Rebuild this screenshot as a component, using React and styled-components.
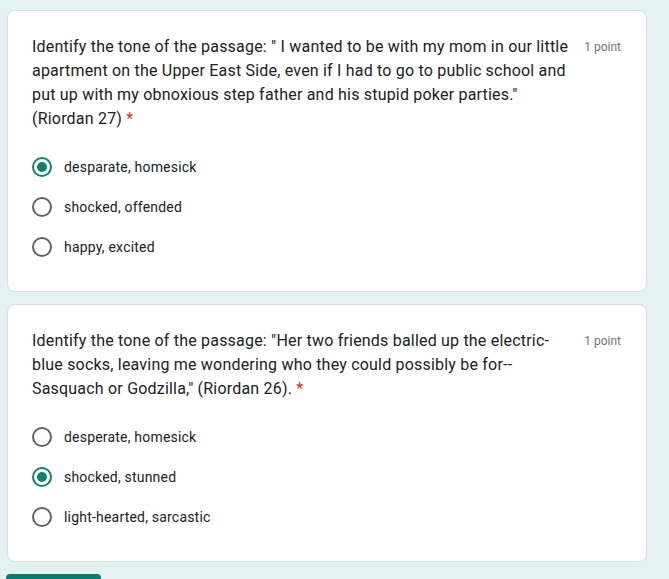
import React from 'react';
import styled, { createGlobalStyle } from 'styled-components';

const Global = createGlobalStyle`
  html, body {
    margin: 0;
    background: #e3f1f0;
  }
  body {
    font-family: Roboto, "Liberation Sans", sans-serif;
    color: #202124;
  }
`;

const Page = styled.div`
  padding: 10px 23px 0 7px;
  display: flex;
  flex-direction: column;
  gap: 12px;
  height: 579px;
  box-sizing: border-box;
  overflow: hidden;
`;

const Card = styled.div`
  background: #fff;
  border: 1px solid #dadce0;
  border-radius: 8px;
  padding: 24px;
  width: 640px;
  box-sizing: border-box;
`;

const Header = styled.div`
  display: flex;
  align-items: flex-start;
  justify-content: space-between;
  gap: 8px;
  margin-bottom: 16px;
`;

const Title = styled.div`
  font-size: 16px;
  line-height: 24px;
  letter-spacing: 0.2px;
  width: 545px;
  color: #202124;
`;

const Line = styled.span`
  display: block;
  white-space: nowrap;
`;

const Required = styled.span`
  color: #d93025;
  margin-left: 4px;
`;

const Points = styled.div`
  font-size: 12px;
  line-height: 24px;
  color: #70757a;
  white-space: nowrap;
  margin-right: 1px;
`;

const Options = styled.div`
  display: flex;
  flex-direction: column;
`;

const Option = styled.label`
  display: flex;
  align-items: center;
  height: 40px;
  gap: 12px;
  font-size: 14px;
  letter-spacing: 0.2px;
  color: #202124;
`;

const Radio = styled.span`
  width: 20px;
  height: 20px;
  box-sizing: border-box;
  border-radius: 50%;
  border: 2px solid ${p => (p.$checked ? '#12806f' : '#5f6368')};
  display: flex;
  align-items: center;
  justify-content: center;
  &::after {
    content: '';
    width: 10px;
    height: 10px;
    border-radius: 50%;
    background: ${p => (p.$checked ? '#12806f' : 'transparent')};
  }
`;

const Submit = styled.div`
  width: 95px;
  height: 36px;
  margin-left: -1px;
  border-radius: 4px;
  background: #0b7b72;
  flex-shrink: 0;
`;

const questions = [
  {
    lines: [
      'Identify the tone of the passage: " I wanted to be with my mom in our little',
      'apartment on the Upper East Side, even if I had to go to public school and',
      'put up with my obnoxious step father and his stupid poker parties."',
      '(Riordan 27)',
    ],
    options: ['desparate, homesick', 'shocked, offended', 'happy, excited'],
    checked: 0,
  },
  {
    lines: [
      'Identify the tone of the passage: "Her two friends balled up the electric-',
      'blue socks, leaving me wondering who they could possibly be for--',
      'Sasquach or Godzilla," (Riordan 26).',
    ],
    options: ['desperate, homesick', 'shocked, stunned', 'light-hearted, sarcastic'],
    checked: 1,
  },
];

export default function App() {
  return (
    <>
      <Global />
      <Page>
        {questions.map((q, i) => (
          <Card key={i}>
            <Header>
              <Title>
                {q.lines.map((l, k) => (
                  <Line key={k}>
                    {l}
                    {k === q.lines.length - 1 && <Required>*</Required>}
                  </Line>
                ))}
              </Title>
              <Points>1 point</Points>
            </Header>
            <Options>
              {q.options.map((o, j) => (
                <Option key={j}>
                  <Radio $checked={j === q.checked} />
                  {o}
                </Option>
              ))}
            </Options>
          </Card>
        ))}
        <Submit />
      </Page>
    </>
  );
}
